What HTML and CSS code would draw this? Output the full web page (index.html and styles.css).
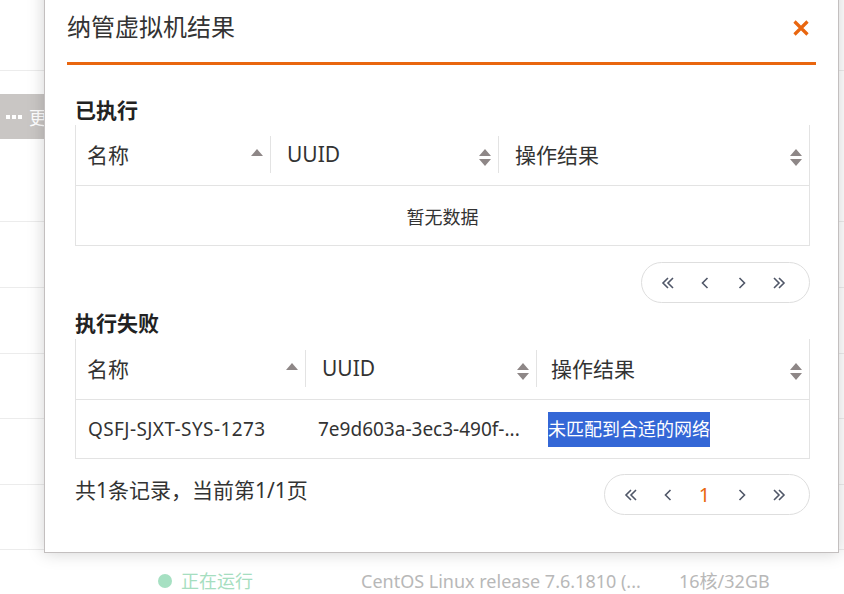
FILE: index.html
```html
<!DOCTYPE html>
<html lang="zh-CN">
<head>
<meta charset="utf-8">
<title>纳管虚拟机结果</title>
<link rel="stylesheet" href="styles.css">
</head>
<body>
<div class="page">
  <div class="bg">
    <div class="bg-row r1"></div>
    <div class="bg-row r2"><div class="more-btn"><span class="dots"><i></i><i></i><i></i></span>更多</div></div>
    <div class="bg-row r3"></div>
    <div class="bg-row r3"></div>
    <div class="bg-row r4"></div>
    <div class="bg-row r3"></div>
    <div class="bg-row r4"></div>
    <div class="bg-row status-row">
      <div class="st-a"><span class="dot"></span>正在运行</div>
      <div class="st-b">CentOS Linux release 7.6.1810 (...</div>
      <div class="st-c">16核/32GB</div>
    </div>
  </div>

  <div class="modal">
    <div class="modal-head">
      <div class="modal-title">纳管虚拟机结果</div>
      <svg class="close" width="16" height="16" viewBox="0 0 16 16"><path d="M1.5 1.5 L14.5 14.5 M14.5 1.5 L1.5 14.5" stroke="#e9660f" stroke-width="3.2" fill="none"/></svg>
    </div>
    <div class="modal-body">
      <div class="sec-title first">已执行</div>
      <div class="tbl">
        <div class="thead">
          <div class="th c1a"><span>名称</span><svg class="sort" width="12" height="17" viewBox="0 0 12 17"><path d="M0 7 L6 0 L12 7 Z" fill="#8e8787"/></svg></div>
          <div class="sep"></div>
          <div class="th c2a pl"><span>UUID</span><svg class="sort" width="12" height="17" viewBox="0 0 12 17"><path d="M0 7 L6 0 L12 7 Z M0 10 L12 10 L6 17 Z" fill="#8e8787"/></svg></div>
          <div class="sep"></div>
          <div class="th c3a pl"><span>操作结果</span><svg class="sort" width="12" height="17" viewBox="0 0 12 17"><path d="M0 7 L6 0 L12 7 Z M0 10 L12 10 L6 17 Z" fill="#8e8787"/></svg></div>
        </div>
        <div class="trow empty">暂无数据</div>
      </div>
      <div class="pager-line">
        <div class="pager p4">
          <span class="pg"><svg width="14" height="12" viewBox="0 0 14 12"><path d="M7 1 L2 6 L7 11 M12 1 L7 6 L12 11" stroke="#505768" stroke-width="1.6" fill="none"/></svg></span>
          <span class="pg"><svg width="8" height="12" viewBox="0 0 8 12"><path d="M6.5 1 L1.5 6 L6.5 11" stroke="#505768" stroke-width="1.6" fill="none"/></svg></span>
          <span class="pg"><svg width="8" height="12" viewBox="0 0 8 12"><path d="M1.5 1 L6.5 6 L1.5 11" stroke="#505768" stroke-width="1.6" fill="none"/></svg></span>
          <span class="pg"><svg width="14" height="12" viewBox="0 0 14 12"><path d="M2 1 L7 6 L2 11 M7 1 L12 6 L7 11" stroke="#505768" stroke-width="1.6" fill="none"/></svg></span>
        </div>
      </div>

      <div class="sec-title second">执行失败</div>
      <div class="tbl">
        <div class="thead">
          <div class="th c1b"><span>名称</span><svg class="sort" width="12" height="17" viewBox="0 0 12 17"><path d="M0 7 L6 0 L12 7 Z" fill="#8e8787"/></svg></div>
          <div class="sep"></div>
          <div class="th c2b pl"><span>UUID</span><svg class="sort" width="12" height="17" viewBox="0 0 12 17"><path d="M0 7 L6 0 L12 7 Z M0 10 L12 10 L6 17 Z" fill="#8e8787"/></svg></div>
          <div class="sep"></div>
          <div class="th c3b pl2"><span>操作结果</span><svg class="sort" width="12" height="17" viewBox="0 0 12 17"><path d="M0 7 L6 0 L12 7 Z M0 10 L12 10 L6 17 Z" fill="#8e8787"/></svg></div>
        </div>
        <div class="trow data">
          <div class="td d1">QSFJ-SJXT-SYS-1273</div>
          <div class="td d2">7e9d603a-3ec3-490f-...</div>
          <div class="td d3"><span class="sel">未匹配到合适的网络</span></div>
        </div>
      </div>
      <div class="footer">
        <div class="total">共1条记录，当前第1/1页</div>
        <div class="pager p5">
          <span class="pg"><svg width="14" height="12" viewBox="0 0 14 12"><path d="M7 1 L2 6 L7 11 M12 1 L7 6 L12 11" stroke="#505768" stroke-width="1.6" fill="none"/></svg></span>
          <span class="pg"><svg width="8" height="12" viewBox="0 0 8 12"><path d="M6.5 1 L1.5 6 L6.5 11" stroke="#505768" stroke-width="1.6" fill="none"/></svg></span>
          <span class="pg num">1</span>
          <span class="pg"><svg width="8" height="12" viewBox="0 0 8 12"><path d="M1.5 1 L6.5 6 L1.5 11" stroke="#505768" stroke-width="1.6" fill="none"/></svg></span>
          <span class="pg"><svg width="14" height="12" viewBox="0 0 14 12"><path d="M2 1 L7 6 L2 11 M7 1 L12 6 L7 11" stroke="#505768" stroke-width="1.6" fill="none"/></svg></span>
        </div>
      </div>
    </div>
  </div>
</div>
</body>
</html>
```

FILE: styles.css
```css
* { box-sizing: border-box; }
html, body { margin: 0; padding: 0; }
body {
  width: 844px;
  height: 594px;
  overflow: hidden;
  background: #fff;
  font-family: "Noto Sans", "Noto Sans CJK SC", sans-serif;
  color: #333;
}
.page { position: relative; width: 844px; height: 594px; overflow: hidden; }

/* background page */
.bg { display: flex; flex-direction: column; }
.bg-row { border-bottom: 1px solid #ececec; flex: none; }
.r1 { height: 71px; }
.r2 { height: 151px; }
.r3 { height: 66px; }
.r4 { height: 65px; }
.more-btn {
  margin-top: 23px;
  width: 120px;
  height: 45px;
  background: #c9c6c4;
  color: #fff;
  font-size: 18px;
  display: flex;
  align-items: center;
  padding-left: 6px;
}
.dots { display: flex; gap: 2px; margin-right: 7px; }
.dots i { display: block; width: 4px; height: 4px; background: #fff; }
.status-row {
  height: 62px;
  display: flex;
  align-items: center;
  padding-left: 158px;
  font-size: 18px;
  line-height: 24px;
  color: #b8b8b8;
  border-bottom: none;
}
.st-a { width: 203px; display: flex; align-items: center; color: #a6dec0; }
.dot { width: 14px; height: 14px; border-radius: 50%; background: #a6e0c2; margin-right: 9px; }
.st-b { width: 318px; }

/* modal */
.modal {
  position: absolute;
  left: 44px;
  top: -18px;
  width: 795px;
  height: 571px;
  background: #fff;
  border: 1px solid #c3bfbf;
  box-shadow: 0 0 16px rgba(0, 0, 0, 0.18);
  padding: 0 22px;
}
.modal-head {
  display: flex;
  justify-content: space-between;
  align-items: center;
  padding: 28px 0 19px;
  border-bottom: 3px solid #e9660f;
}
.modal-title { font-size: 24px; line-height: 32px; color: #333; }
.close { margin-right: 7px; margin-top: 1px; }

.modal-body { padding: 0 6px 0 8px; }
.sec-title { font-size: 21px; font-weight: bold; line-height: 26px; color: #222; }
.sec-title.first { margin-top: 32px; margin-bottom: 2px; }
.sec-title.second { margin-top: 7px; margin-bottom: 3px; }

.tbl { width: 735px; border-left: 1px solid #e3e3e3; border-right: 1px solid #e3e3e3; }
.thead {
  display: flex;
  align-items: center;
  height: 61px;
  border-bottom: 1px solid #e3e3e3;
}
.th {
  display: flex;
  align-items: center;
  justify-content: space-between;
  height: 100%;
  font-size: 21px;
  padding: 0 7px 0 11px;
  flex: none;
}
.th.pl { padding-left: 16px; }
.th.pl2 { padding-left: 14px; }
.th span { margin-top: -2px; }
.sort { margin-top: 4px; flex: none; }
.sep { width: 1px; height: 37px; background: #e3e3e3; flex: none; margin-top: -2px; }
.c1a { width: 194px; }
.c2a { width: 227px; }
.c3a { width: 310px; }
.c1b { width: 229px; }
.c2b { width: 230px; }
.c3b { width: 272px; }

.trow { border-bottom: 1px solid #e3e3e3; font-size: 18px; color: #333; }
.trow.empty {
  height: 60px;
  display: flex;
  align-items: center;
  justify-content: center;
}
.trow.data { height: 59px; display: flex; align-items: center; }
.td { flex: none; padding-left: 12px; white-space: nowrap; overflow: hidden; }
.d1 { width: 230px; font-size: 19px; letter-spacing: 0.4px; }
.d2 { width: 231px; font-size: 19px; }
.d3 { width: 272px; padding-left: 11px; }
.sel { display: inline-block; background: #3467d6; color: #fff; line-height: 35px; }

.pager-line { display: flex; justify-content: flex-end; margin-top: 16px; padding-right: 0; }
.pager {
  display: flex;
  align-items: center;
  height: 41px;
  border: 1px solid #dedede;
  border-radius: 21px;
  padding: 0 12px 0 7px;
}
.pg {
  width: 37px;
  display: flex;
  justify-content: center;
  align-items: center;
}
.pg.num { color: #e9660f; font-size: 20px; line-height: 24px; }

.footer {
  display: flex;
  justify-content: space-between;
  align-items: flex-start;
  margin-top: 15px;
}
.total { font-size: 21px; line-height: 28px; margin-top: 2px; color: #333; }
```
